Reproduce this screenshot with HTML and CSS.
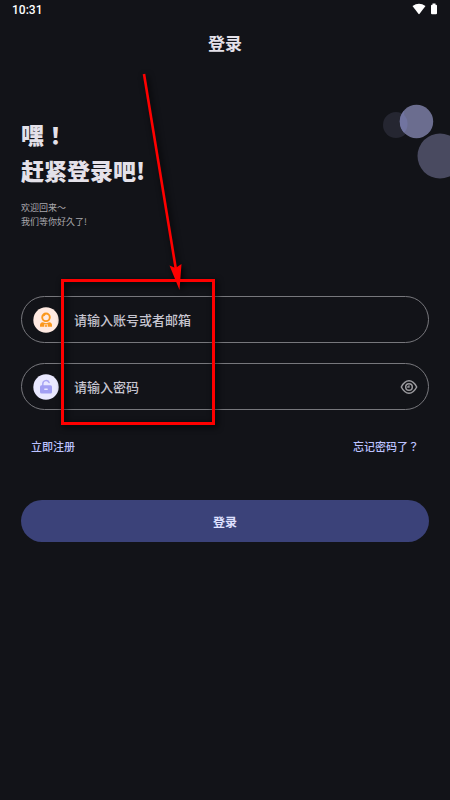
FILE: index.html
```html
<!DOCTYPE html>
<html lang="zh-CN">
<head>
<meta charset="utf-8">
<meta name="viewport" content="width=device-width, initial-scale=1">
<title>登录</title>
<link rel="stylesheet" href="styles.css">
</head>
<body>
<div class="screen">
  <div class="status-bar">
    <span>10:31</span>
    <span class="status-icons">
      <svg width="14" height="12" viewBox="0 0 14 12" aria-hidden="true"><path d="M0.500 3Q7-1.600 13.500 3L7.600 10.800Q7 11.500 6.400 10.800Z" fill="#fff"/></svg>
      <svg width="8" height="12" viewBox="0 0 8 12" aria-hidden="true"><path d="M2.500 0.500h3v1.200h0.500q1 0 1 1v7.600q0 1-1 1h-4q-1 0-1-1v-7.600q0-1 1-1h0.500z" fill="#fff"/></svg>
    </span>
  </div>
  <header class="title-bar"><h1>登录</h1></header>
  <main>
    <section class="hero">
      <h2>嘿<span class="mark" lang="zh-TW">！</span><br>赶紧登录吧!</h2>
      <p>欢迎回来～<br>我们等你好久了!</p>
      <svg class="bubbles" width="68" height="75" viewBox="0 0 68 75" aria-hidden="true">
        <circle cx="14" cy="21" r="13" fill="#252631"/>
        <circle cx="58" cy="52" r="22.500" fill="#494a60"/>
        <circle cx="34.500" cy="17.500" r="16.700" fill="#6b6d8f"/>
        <path d="M22.200 6.400A16.700 16.700 0 0 0 22 28.800A13 13 0 0 0 22.200 11Z" fill="#7174a0"/>
      </svg>
    </section>
    <form class="login">
      <label class="field">
        <svg class="badge" viewBox="0 0 26 26" aria-hidden="true">
          <circle cx="13" cy="13" r="12.700" fill="#ffeae2"/>
          <circle cx="13" cy="10.300" r="3.800" fill="none" stroke="#fb981d" stroke-width="1.900"/>
          <path d="M9.500 9.700V8.500L11.500 6.800H13Q12.500 9.300 9.500 9.700Z" fill="#fb981d"/>
          <path d="M7 19.700v-1.500q0-2.700 2.700-3l3.300 1 3.300-1q2.700 0.300 2.700 3v1.500h-4v-2.400h-0.700v2.400h-2.600v-2.400h-0.700v2.400z" fill="#fb981d"/>
          <path d="M13 17v1.400" stroke="#ffeae2" stroke-width="1"/>
        </svg>
        <input type="text" placeholder="请输入账号或者邮箱" aria-label="账号或者邮箱">
      </label>
      <div class="field">
        <svg class="badge" viewBox="0 0 26 26" aria-hidden="true">
          <circle cx="13" cy="13" r="12.700" fill="#e9e8ff"/>
          <path d="M9.800 12v-2.300a3.300 3.300 0 0 1 6.300-1.200" fill="none" stroke="#aaa7f5" stroke-width="1.500" stroke-linecap="round"/>
          <rect x="7" y="11.300" width="12" height="8.200" rx="1.500" fill="#a29ff3"/>
          <path d="M11.800 15.300h2.400" stroke="#e9e8ff" stroke-width="1.400" stroke-linecap="round"/>
        </svg>
        <input type="password" placeholder="请输入密码" aria-label="密码">
        <button class="reveal" type="button" aria-label="显示密码">
          <svg width="18" height="16" viewBox="0 0 18 16" fill="none" stroke="#9b9a9e" stroke-width="1.500"><path d="M1.300 8Q4.500 1.800 9 1.800T16.700 8Q13.500 14.200 9 14.200T1.300 8Z"/><circle cx="9" cy="8" r="3.300"/><path d="M9 6.200V8H7.200" stroke-width="1.300"/></svg>
        </button>
      </div>
      <div class="links"><a href="#">立即注册</a><a href="#">忘记密码了<span class="mark" lang="zh-TW">？</span></a></div>
      <button class="submit" type="submit">登录</button>
    </form>
  </main>
  <svg class="annotation" width="230" height="440" viewBox="0 0 230 440" aria-hidden="true">
    <rect x="62.500" y="280.500" width="151" height="143" fill="none" stroke="#f00" stroke-width="3"/>
    <path d="M144 74L176 270" stroke="#f00" stroke-width="2.600"/>
    <path d="M169.500 265.500L175.500 268L181.500 264L179.500 290Z" fill="#f00"/>
  </svg>
</div>
</body>
</html>
```
FILE: styles.css
```css
* {
  box-sizing: border-box;
}

body {
  margin: 0;
  background: #121318;
  color: #e4e1e9;
  font-family: "Noto Sans CJK SC", sans-serif;
}

h1, h2, p {
  margin: 0;
}

button, input {
  font-family: inherit;
}

.mark {
  font-family: "Noto Sans CJK TC", sans-serif;
}

.screen {
  position: relative;
  min-height: 100vh;
  overflow: hidden;
}

.status-bar {
  display: flex;
  align-items: center;
  justify-content: space-between;
  height: 20px;
  padding: 0 12px;
  color: #fff;
  font: 500 12px/20px Roboto, sans-serif;
}

.status-icons {
  display: flex;
  gap: 4px;
  padding-bottom: 2px;
}

.title-bar {
  display: flex;
  align-items: center;
  justify-content: center;
  height: 46px;
}

.title-bar h1 {
  font-size: 17px;
  line-height: 24px;
  font-weight: 700;
}

main {
  padding: 50px 21px 0;
}

.hero {
  position: relative;
  margin-bottom: 67px;
}

.hero h2 {
  margin-bottom: 13px;
  font-size: 23px;
  line-height: 36px;
  font-weight: 900;
}

.hero p {
  color: #a9a8ad;
  font-size: 9px;
  line-height: 14px;
}

.bubbles {
  position: absolute;
  top: -12px;
  right: -21px;
}

.login {
  display: flex;
  flex-direction: column;
}

.field {
  display: flex;
  align-items: center;
  height: 47px;
  margin-bottom: 20px;
  padding: 0 10px 0 11px;
  border: 1px solid #77777c;
  border-radius: 24px;
}

.badge {
  flex: none;
  width: 26px;
  height: 26px;
  margin-right: 15px;
}

.field input {
  flex: 1;
  min-width: 0;
  padding: 0;
  border: 0;
  outline: 0;
  background: transparent;
  color: #c7c5d0;
  font-size: 13px;
  font-weight: 500;
}

.field input::placeholder {
  color: #c7c5d0;
  opacity: 1;
}

.reveal {
  display: flex;
  padding: 0;
  border: 0;
  background: transparent;
}

.links {
  display: flex;
  justify-content: space-between;
  margin-bottom: 46px;
  padding: 8px 10px 0;
  font-size: 11px;
  line-height: 16px;
  font-weight: 500;
}

.links a {
  color: #bcc2ff;
  text-decoration: none;
}

.submit {
  height: 42px;
  border: 0;
  border-radius: 21px;
  background: #3b4279;
  color: #dfe0ff;
  font-size: 12px;
  font-weight: 700;
}

.annotation {
  position: absolute;
  top: 0;
  left: 0;
  pointer-events: none;
  filter: drop-shadow(2px 2px 3px #000);
}
```
